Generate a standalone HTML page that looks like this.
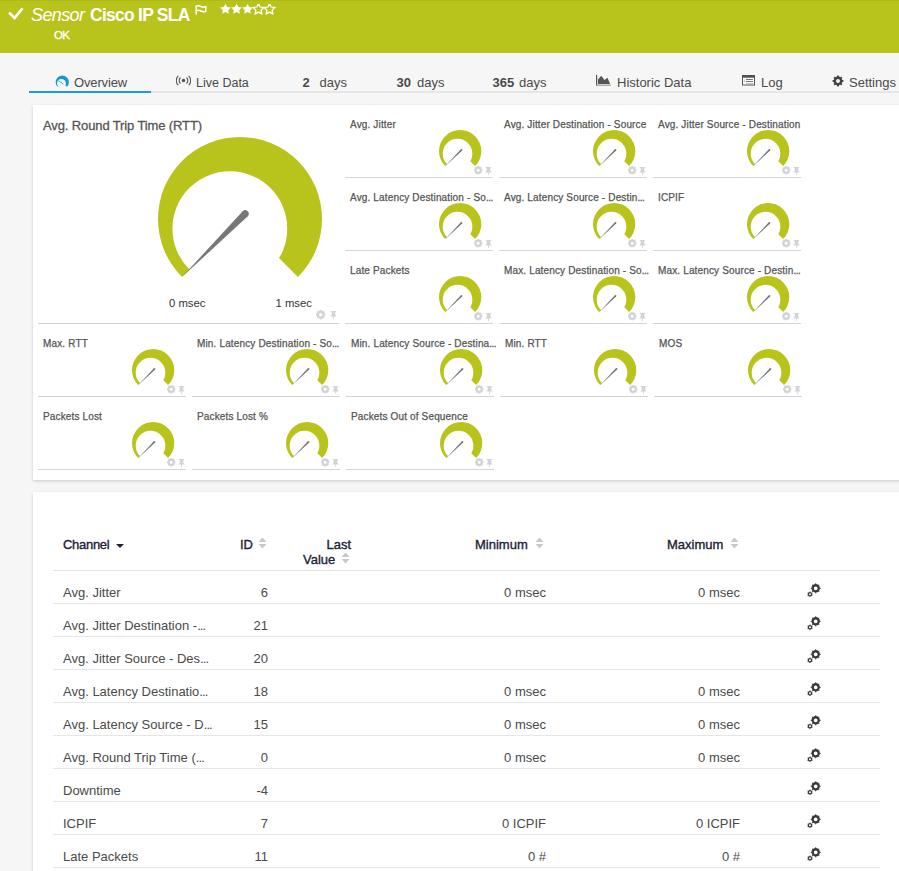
<!DOCTYPE html>
<html><head><meta charset="utf-8"><style>
html,body{margin:0;padding:0;width:899px;height:871px;overflow:hidden;background:#f6f6f6;font-family:"Liberation Sans",sans-serif;}
.t{position:absolute;white-space:nowrap;line-height:1.15;}
.panel{position:absolute;background:#fff;box-shadow:0 1px 3px rgba(0,0,0,0.18);}
.tt{font-size:10px;letter-spacing:0.15px;-webkit-text-stroke:0.25px #555;color:#555;}
.el2{font-style:normal;letter-spacing:-0.5px;}
.th{font-size:13px;-webkit-text-stroke:0.35px #1c2233;color:#1c2233;}
.td{font-size:13px;color:#4a4a4a;}
.el{font-style:normal;letter-spacing:-0.9px;}
</style></head><body>
<div style='position:absolute;left:0;top:0;width:899px;height:53px;background:#b8c41c'></div><div style='position:absolute;left:0;top:0;width:899px;height:1.3px;background:#afbb19'></div><svg style='position:absolute;left:7px;top:6px' width='18' height='16'><path d='M2,6.5 L7.6,12 L15.5,2.2' stroke='#fff' stroke-width='2.6' fill='none'/></svg><div class='t' style='left:31px;top:4.5px;font-size:18px;letter-spacing:-0.63px;font-style:italic;color:#fff'>Sensor</div><div class='t' style='left:90px;top:5px;font-size:17.5px;letter-spacing:-0.75px;font-weight:bold;color:#fff'>Cisco IP SLA</div><svg style='position:absolute;left:195px;top:5px' width='13' height='10'><path d='M1.2,0.5 V9.8 M1.2,1.3 Q3.5,0.2 6,1.5 Q8.5,2.6 10.8,1.6 V6.2 Q8.5,7.2 6,6 Q3.5,4.8 1.2,5.8' stroke='#fff' stroke-width='1.5' fill='none'/></svg><svg style='position:absolute;left:220px;top:4px' width='58' height='12'><polygon points='5.50,-0.30 7.15,3.03 10.83,3.57 8.16,6.17 8.79,9.83 5.50,8.10 2.21,9.83 2.84,6.17 0.17,3.57 3.85,3.03' fill='#fff'/><polygon points='16.50,-0.30 18.15,3.03 21.83,3.57 19.16,6.17 19.79,9.83 16.50,8.10 13.21,9.83 13.84,6.17 11.17,3.57 14.85,3.03' fill='#fff'/><polygon points='27.50,-0.30 29.15,3.03 32.83,3.57 30.16,6.17 30.79,9.83 27.50,8.10 24.21,9.83 24.84,6.17 22.17,3.57 25.85,3.03' fill='#fff'/><polygon points='38.50,-0.30 40.15,3.03 43.83,3.57 41.16,6.17 41.79,9.83 38.50,8.10 35.21,9.83 35.84,6.17 33.17,3.57 36.85,3.03' fill='none' stroke='#fff' stroke-width='1.3'/><polygon points='49.50,-0.30 51.15,3.03 54.83,3.57 52.16,6.17 52.79,9.83 49.50,8.10 46.21,9.83 46.84,6.17 44.17,3.57 47.85,3.03' fill='none' stroke='#fff' stroke-width='1.3'/></svg><div class='t' style='left:54px;top:29px;font-size:11.5px;letter-spacing:-0.8px;-webkit-text-stroke:0.3px #fff;color:#fff'>OK</div><div style='position:absolute;left:30px;top:91px;width:869px;height:2px;background:#e6e6e6'></div><div style='position:absolute;left:29px;top:91px;width:122px;height:2px;background:#1a9bd7'></div><svg style='position:absolute;left:50px;top:73.3px' width='24' height='18'><path d='M12.3,9.2 L7.63,13.87 A6.6,6.6 0 1 1 16.97,13.87 Z' fill='#139ad6'/><circle cx='11.4' cy='10.3' r='4.4' fill='#f6f6f6'/><path d='M8.3,7.6 L13.3,11' stroke='#139ad6' stroke-width='0.9'/></svg><div class='t' style='left:74px;top:76px;font-size:13px;letter-spacing:-0.15px;color:#4a4a4a'>Overview</div><svg style='position:absolute;left:176px;top:75px' width='15' height='11'><circle cx='7.5' cy='5.5' r='1.8' fill='#555'/><path d='M4.5,2.5 A4,4 0 0 0 4.5,8.5 M10.5,2.5 A4,4 0 0 1 10.5,8.5 M2.3,0.8 A6.5,6.5 0 0 0 2.3,10.2 M12.7,0.8 A6.5,6.5 0 0 1 12.7,10.2' stroke='#555' stroke-width='1.1' fill='none'/></svg><div class='t' style='left:196px;top:76px;font-size:12.5px;color:#4a4a4a'>Live Data</div><div class='t' style='left:302.5px;top:76px;font-size:13px;font-weight:bold;color:#4a4a4a'>2</div><div class='t' style='left:319.5px;top:76px;font-size:13px;color:#4a4a4a'>days</div><div class='t' style='left:396.5px;top:76px;font-size:13px;font-weight:bold;color:#4a4a4a'>30</div><div class='t' style='left:417px;top:76px;font-size:13px;color:#4a4a4a'>days</div><div class='t' style='left:492.5px;top:76px;font-size:13px;font-weight:bold;color:#4a4a4a'>365</div><div class='t' style='left:519px;top:76px;font-size:13px;color:#4a4a4a'>days</div><svg style='position:absolute;left:590px;top:70px' width='24' height='20'><rect x='6' y='5' width='1.2' height='11' fill='#555'/><rect x='6' y='14.6' width='15' height='1.2' fill='#999'/><path d='M8,14 L8,9.5 L11.2,5.8 L14.5,10 L17.5,7.8 L20,13.8 V14 Z' fill='#555'/></svg><div class='t' style='left:617px;top:76px;font-size:13px;color:#4a4a4a'>Historic Data</div><svg style='position:absolute;left:736px;top:70px' width='24' height='20'><rect x='6.5' y='5.5' width='12' height='9.5' fill='#fff' stroke='#555' stroke-width='1'/><rect x='6' y='5' width='13' height='2.7' fill='#505050'/><path d='M10,9.5 H17 M10,11.5 H17' stroke='#666' stroke-width='0.9'/><path d='M10,13.5 H17' stroke='#bbb' stroke-width='0.9'/><path d='M8.3,9.5 V12' stroke='#aaa' stroke-width='0.7'/></svg><div class='t' style='left:761px;top:76px;font-size:13px;color:#4a4a4a'>Log</div><svg style='position:absolute;left:832px;top:74.5px' width='12' height='12'><circle cx='6' cy='6' r='3.2' fill='none' stroke='#444' stroke-width='2.4'/><rect x='5' y='0.6' width='2' height='2' fill='#444' transform='rotate(0 6 6)'/><rect x='5' y='0.6' width='2' height='2' fill='#444' transform='rotate(45 6 6)'/><rect x='5' y='0.6' width='2' height='2' fill='#444' transform='rotate(90 6 6)'/><rect x='5' y='0.6' width='2' height='2' fill='#444' transform='rotate(135 6 6)'/><rect x='5' y='0.6' width='2' height='2' fill='#444' transform='rotate(180 6 6)'/><rect x='5' y='0.6' width='2' height='2' fill='#444' transform='rotate(225 6 6)'/><rect x='5' y='0.6' width='2' height='2' fill='#444' transform='rotate(270 6 6)'/><rect x='5' y='0.6' width='2' height='2' fill='#444' transform='rotate(315 6 6)'/></svg><div class='t' style='left:849px;top:76px;font-size:13px;color:#4a4a4a'>Settings</div><div class='panel' style='left:33px;top:105px;width:900px;height:375px'></div><div class='t' style='left:43px;top:119px;font-size:13px;letter-spacing:-0.12px;-webkit-text-stroke:0.3px #555;color:#555'>Avg. Round Trip Time (RTT)</div><svg style='position:absolute;left:153.90px;top:132.50px' width='172.00' height='172.00'><path d='M86.00,86.00 L28.02,143.98 A82.00,82.00 0 1 1 143.98,143.98 Z' fill='#b8c41c'/><circle cx='75.83' cy='95.68' r='57.40' fill='#fff'/><path d='M27.72,144.28 L93.77,83.33 A3.61,3.61 0 0 0 88.67,78.23 Z' fill='#777'/></svg><div class='t' style='left:169px;top:297px;font-size:11.3px;color:#333'>0 msec</div><div class='t' style='left:275.5px;top:297px;font-size:11.3px;color:#333'>1 msec</div><svg style='position:absolute;left:314.80px;top:309.30px' width='11.40' height='11.40'><circle cx='5.70' cy='5.70' r='2.91' fill='none' stroke='#d2d4d6' stroke-width='2.44'/><rect x='4.71' y='1.00' width='1.97' height='1.88' fill='#d2d4d6' transform='rotate(0 5.70 5.70)'/><rect x='4.71' y='1.00' width='1.97' height='1.88' fill='#d2d4d6' transform='rotate(45 5.70 5.70)'/><rect x='4.71' y='1.00' width='1.97' height='1.88' fill='#d2d4d6' transform='rotate(90 5.70 5.70)'/><rect x='4.71' y='1.00' width='1.97' height='1.88' fill='#d2d4d6' transform='rotate(135 5.70 5.70)'/><rect x='4.71' y='1.00' width='1.97' height='1.88' fill='#d2d4d6' transform='rotate(180 5.70 5.70)'/><rect x='4.71' y='1.00' width='1.97' height='1.88' fill='#d2d4d6' transform='rotate(225 5.70 5.70)'/><rect x='4.71' y='1.00' width='1.97' height='1.88' fill='#d2d4d6' transform='rotate(270 5.70 5.70)'/><rect x='4.71' y='1.00' width='1.97' height='1.88' fill='#d2d4d6' transform='rotate(315 5.70 5.70)'/></svg><svg style='position:absolute;left:329.5px;top:310.5px' width='7' height='8'><path d='M0.8,0 H6.2 V1 H5.3 V3.6 L6.6,5.6 H3.9 V8 H3.1 V5.6 H0.4 L1.7,3.6 V1 H0.8 Z' fill='#d2d4d6'/></svg><div style='position:absolute;left:38px;top:323px;width:301px;height:1px;background:#d5d5d5'></div><div class='t tt' style='left:350px;top:119px'>Avg. Jitter</div><svg style='position:absolute;left:434.85px;top:125.85px' width='50.30' height='50.30'><path d='M25.15,25.15 L10.19,40.11 A21.15,21.15 0 1 1 40.11,40.11 Z' fill='#b8c41c'/><circle cx='22.53' cy='27.65' r='14.80' fill='#fff'/><path d='M9.89,40.41 L27.15,24.46 A0.93,0.93 0 0 0 25.84,23.15 Z' fill='#777'/></svg><svg style='position:absolute;left:472.60px;top:165.30px' width='10.40' height='10.40'><circle cx='5.20' cy='5.20' r='2.60' fill='none' stroke='#d2d4d6' stroke-width='2.18'/><rect x='4.32' y='1.00' width='1.76' height='1.68' fill='#d2d4d6' transform='rotate(0 5.20 5.20)'/><rect x='4.32' y='1.00' width='1.76' height='1.68' fill='#d2d4d6' transform='rotate(45 5.20 5.20)'/><rect x='4.32' y='1.00' width='1.76' height='1.68' fill='#d2d4d6' transform='rotate(90 5.20 5.20)'/><rect x='4.32' y='1.00' width='1.76' height='1.68' fill='#d2d4d6' transform='rotate(135 5.20 5.20)'/><rect x='4.32' y='1.00' width='1.76' height='1.68' fill='#d2d4d6' transform='rotate(180 5.20 5.20)'/><rect x='4.32' y='1.00' width='1.76' height='1.68' fill='#d2d4d6' transform='rotate(225 5.20 5.20)'/><rect x='4.32' y='1.00' width='1.76' height='1.68' fill='#d2d4d6' transform='rotate(270 5.20 5.20)'/><rect x='4.32' y='1.00' width='1.76' height='1.68' fill='#d2d4d6' transform='rotate(315 5.20 5.20)'/></svg><svg style='position:absolute;left:485.3px;top:167px' width='7' height='8'><path d='M0.8,0 H6.2 V1 H5.3 V3.6 L6.6,5.6 H3.9 V8 H3.1 V5.6 H0.4 L1.7,3.6 V1 H0.8 Z' fill='#d2d4d6'/></svg><div style='position:absolute;left:345px;top:177px;width:148px;height:1px;background:#d5d5d5'></div><div class='t tt' style='left:504px;top:119px'>Avg. Jitter Destination - Source</div><svg style='position:absolute;left:588.85px;top:125.85px' width='50.30' height='50.30'><path d='M25.15,25.15 L10.19,40.11 A21.15,21.15 0 1 1 40.11,40.11 Z' fill='#b8c41c'/><circle cx='22.53' cy='27.65' r='14.80' fill='#fff'/><path d='M9.89,40.41 L27.15,24.46 A0.93,0.93 0 0 0 25.84,23.15 Z' fill='#777'/></svg><svg style='position:absolute;left:626.60px;top:165.30px' width='10.40' height='10.40'><circle cx='5.20' cy='5.20' r='2.60' fill='none' stroke='#d2d4d6' stroke-width='2.18'/><rect x='4.32' y='1.00' width='1.76' height='1.68' fill='#d2d4d6' transform='rotate(0 5.20 5.20)'/><rect x='4.32' y='1.00' width='1.76' height='1.68' fill='#d2d4d6' transform='rotate(45 5.20 5.20)'/><rect x='4.32' y='1.00' width='1.76' height='1.68' fill='#d2d4d6' transform='rotate(90 5.20 5.20)'/><rect x='4.32' y='1.00' width='1.76' height='1.68' fill='#d2d4d6' transform='rotate(135 5.20 5.20)'/><rect x='4.32' y='1.00' width='1.76' height='1.68' fill='#d2d4d6' transform='rotate(180 5.20 5.20)'/><rect x='4.32' y='1.00' width='1.76' height='1.68' fill='#d2d4d6' transform='rotate(225 5.20 5.20)'/><rect x='4.32' y='1.00' width='1.76' height='1.68' fill='#d2d4d6' transform='rotate(270 5.20 5.20)'/><rect x='4.32' y='1.00' width='1.76' height='1.68' fill='#d2d4d6' transform='rotate(315 5.20 5.20)'/></svg><svg style='position:absolute;left:639.3px;top:167px' width='7' height='8'><path d='M0.8,0 H6.2 V1 H5.3 V3.6 L6.6,5.6 H3.9 V8 H3.1 V5.6 H0.4 L1.7,3.6 V1 H0.8 Z' fill='#d2d4d6'/></svg><div style='position:absolute;left:499px;top:177px;width:148px;height:1px;background:#d5d5d5'></div><div class='t tt' style='left:658px;top:119px'>Avg. Jitter Source - Destination</div><svg style='position:absolute;left:742.85px;top:125.85px' width='50.30' height='50.30'><path d='M25.15,25.15 L10.19,40.11 A21.15,21.15 0 1 1 40.11,40.11 Z' fill='#b8c41c'/><circle cx='22.53' cy='27.65' r='14.80' fill='#fff'/><path d='M9.89,40.41 L27.15,24.46 A0.93,0.93 0 0 0 25.84,23.15 Z' fill='#777'/></svg><svg style='position:absolute;left:780.60px;top:165.30px' width='10.40' height='10.40'><circle cx='5.20' cy='5.20' r='2.60' fill='none' stroke='#d2d4d6' stroke-width='2.18'/><rect x='4.32' y='1.00' width='1.76' height='1.68' fill='#d2d4d6' transform='rotate(0 5.20 5.20)'/><rect x='4.32' y='1.00' width='1.76' height='1.68' fill='#d2d4d6' transform='rotate(45 5.20 5.20)'/><rect x='4.32' y='1.00' width='1.76' height='1.68' fill='#d2d4d6' transform='rotate(90 5.20 5.20)'/><rect x='4.32' y='1.00' width='1.76' height='1.68' fill='#d2d4d6' transform='rotate(135 5.20 5.20)'/><rect x='4.32' y='1.00' width='1.76' height='1.68' fill='#d2d4d6' transform='rotate(180 5.20 5.20)'/><rect x='4.32' y='1.00' width='1.76' height='1.68' fill='#d2d4d6' transform='rotate(225 5.20 5.20)'/><rect x='4.32' y='1.00' width='1.76' height='1.68' fill='#d2d4d6' transform='rotate(270 5.20 5.20)'/><rect x='4.32' y='1.00' width='1.76' height='1.68' fill='#d2d4d6' transform='rotate(315 5.20 5.20)'/></svg><svg style='position:absolute;left:793.3px;top:167px' width='7' height='8'><path d='M0.8,0 H6.2 V1 H5.3 V3.6 L6.6,5.6 H3.9 V8 H3.1 V5.6 H0.4 L1.7,3.6 V1 H0.8 Z' fill='#d2d4d6'/></svg><div style='position:absolute;left:653px;top:177px;width:148px;height:1px;background:#d5d5d5'></div><div class='t tt' style='left:350px;top:192px'>Avg. Latency Destination - So<i class=el2>...</i></div><svg style='position:absolute;left:434.85px;top:198.85px' width='50.30' height='50.30'><path d='M25.15,25.15 L10.19,40.11 A21.15,21.15 0 1 1 40.11,40.11 Z' fill='#b8c41c'/><circle cx='22.53' cy='27.65' r='14.80' fill='#fff'/><path d='M9.89,40.41 L27.15,24.46 A0.93,0.93 0 0 0 25.84,23.15 Z' fill='#777'/></svg><svg style='position:absolute;left:472.60px;top:238.30px' width='10.40' height='10.40'><circle cx='5.20' cy='5.20' r='2.60' fill='none' stroke='#d2d4d6' stroke-width='2.18'/><rect x='4.32' y='1.00' width='1.76' height='1.68' fill='#d2d4d6' transform='rotate(0 5.20 5.20)'/><rect x='4.32' y='1.00' width='1.76' height='1.68' fill='#d2d4d6' transform='rotate(45 5.20 5.20)'/><rect x='4.32' y='1.00' width='1.76' height='1.68' fill='#d2d4d6' transform='rotate(90 5.20 5.20)'/><rect x='4.32' y='1.00' width='1.76' height='1.68' fill='#d2d4d6' transform='rotate(135 5.20 5.20)'/><rect x='4.32' y='1.00' width='1.76' height='1.68' fill='#d2d4d6' transform='rotate(180 5.20 5.20)'/><rect x='4.32' y='1.00' width='1.76' height='1.68' fill='#d2d4d6' transform='rotate(225 5.20 5.20)'/><rect x='4.32' y='1.00' width='1.76' height='1.68' fill='#d2d4d6' transform='rotate(270 5.20 5.20)'/><rect x='4.32' y='1.00' width='1.76' height='1.68' fill='#d2d4d6' transform='rotate(315 5.20 5.20)'/></svg><svg style='position:absolute;left:485.3px;top:240px' width='7' height='8'><path d='M0.8,0 H6.2 V1 H5.3 V3.6 L6.6,5.6 H3.9 V8 H3.1 V5.6 H0.4 L1.7,3.6 V1 H0.8 Z' fill='#d2d4d6'/></svg><div style='position:absolute;left:345px;top:250px;width:148px;height:1px;background:#d5d5d5'></div><div class='t tt' style='left:504px;top:192px'>Avg. Latency Source - Destin<i class=el2>...</i></div><svg style='position:absolute;left:588.85px;top:198.85px' width='50.30' height='50.30'><path d='M25.15,25.15 L10.19,40.11 A21.15,21.15 0 1 1 40.11,40.11 Z' fill='#b8c41c'/><circle cx='22.53' cy='27.65' r='14.80' fill='#fff'/><path d='M9.89,40.41 L27.15,24.46 A0.93,0.93 0 0 0 25.84,23.15 Z' fill='#777'/></svg><svg style='position:absolute;left:626.60px;top:238.30px' width='10.40' height='10.40'><circle cx='5.20' cy='5.20' r='2.60' fill='none' stroke='#d2d4d6' stroke-width='2.18'/><rect x='4.32' y='1.00' width='1.76' height='1.68' fill='#d2d4d6' transform='rotate(0 5.20 5.20)'/><rect x='4.32' y='1.00' width='1.76' height='1.68' fill='#d2d4d6' transform='rotate(45 5.20 5.20)'/><rect x='4.32' y='1.00' width='1.76' height='1.68' fill='#d2d4d6' transform='rotate(90 5.20 5.20)'/><rect x='4.32' y='1.00' width='1.76' height='1.68' fill='#d2d4d6' transform='rotate(135 5.20 5.20)'/><rect x='4.32' y='1.00' width='1.76' height='1.68' fill='#d2d4d6' transform='rotate(180 5.20 5.20)'/><rect x='4.32' y='1.00' width='1.76' height='1.68' fill='#d2d4d6' transform='rotate(225 5.20 5.20)'/><rect x='4.32' y='1.00' width='1.76' height='1.68' fill='#d2d4d6' transform='rotate(270 5.20 5.20)'/><rect x='4.32' y='1.00' width='1.76' height='1.68' fill='#d2d4d6' transform='rotate(315 5.20 5.20)'/></svg><svg style='position:absolute;left:639.3px;top:240px' width='7' height='8'><path d='M0.8,0 H6.2 V1 H5.3 V3.6 L6.6,5.6 H3.9 V8 H3.1 V5.6 H0.4 L1.7,3.6 V1 H0.8 Z' fill='#d2d4d6'/></svg><div style='position:absolute;left:499px;top:250px;width:148px;height:1px;background:#d5d5d5'></div><div class='t tt' style='left:658px;top:192px'>ICPIF</div><svg style='position:absolute;left:742.85px;top:198.85px' width='50.30' height='50.30'><path d='M25.15,25.15 L10.19,40.11 A21.15,21.15 0 1 1 40.11,40.11 Z' fill='#b8c41c'/><circle cx='22.53' cy='27.65' r='14.80' fill='#fff'/><path d='M9.89,40.41 L27.15,24.46 A0.93,0.93 0 0 0 25.84,23.15 Z' fill='#777'/></svg><svg style='position:absolute;left:780.60px;top:238.30px' width='10.40' height='10.40'><circle cx='5.20' cy='5.20' r='2.60' fill='none' stroke='#d2d4d6' stroke-width='2.18'/><rect x='4.32' y='1.00' width='1.76' height='1.68' fill='#d2d4d6' transform='rotate(0 5.20 5.20)'/><rect x='4.32' y='1.00' width='1.76' height='1.68' fill='#d2d4d6' transform='rotate(45 5.20 5.20)'/><rect x='4.32' y='1.00' width='1.76' height='1.68' fill='#d2d4d6' transform='rotate(90 5.20 5.20)'/><rect x='4.32' y='1.00' width='1.76' height='1.68' fill='#d2d4d6' transform='rotate(135 5.20 5.20)'/><rect x='4.32' y='1.00' width='1.76' height='1.68' fill='#d2d4d6' transform='rotate(180 5.20 5.20)'/><rect x='4.32' y='1.00' width='1.76' height='1.68' fill='#d2d4d6' transform='rotate(225 5.20 5.20)'/><rect x='4.32' y='1.00' width='1.76' height='1.68' fill='#d2d4d6' transform='rotate(270 5.20 5.20)'/><rect x='4.32' y='1.00' width='1.76' height='1.68' fill='#d2d4d6' transform='rotate(315 5.20 5.20)'/></svg><svg style='position:absolute;left:793.3px;top:240px' width='7' height='8'><path d='M0.8,0 H6.2 V1 H5.3 V3.6 L6.6,5.6 H3.9 V8 H3.1 V5.6 H0.4 L1.7,3.6 V1 H0.8 Z' fill='#d2d4d6'/></svg><div style='position:absolute;left:653px;top:250px;width:148px;height:1px;background:#d5d5d5'></div><div class='t tt' style='left:350px;top:265px'>Late Packets</div><svg style='position:absolute;left:434.85px;top:271.85px' width='50.30' height='50.30'><path d='M25.15,25.15 L10.19,40.11 A21.15,21.15 0 1 1 40.11,40.11 Z' fill='#b8c41c'/><circle cx='22.53' cy='27.65' r='14.80' fill='#fff'/><path d='M9.89,40.41 L27.15,24.46 A0.93,0.93 0 0 0 25.84,23.15 Z' fill='#777'/></svg><svg style='position:absolute;left:472.60px;top:311.30px' width='10.40' height='10.40'><circle cx='5.20' cy='5.20' r='2.60' fill='none' stroke='#d2d4d6' stroke-width='2.18'/><rect x='4.32' y='1.00' width='1.76' height='1.68' fill='#d2d4d6' transform='rotate(0 5.20 5.20)'/><rect x='4.32' y='1.00' width='1.76' height='1.68' fill='#d2d4d6' transform='rotate(45 5.20 5.20)'/><rect x='4.32' y='1.00' width='1.76' height='1.68' fill='#d2d4d6' transform='rotate(90 5.20 5.20)'/><rect x='4.32' y='1.00' width='1.76' height='1.68' fill='#d2d4d6' transform='rotate(135 5.20 5.20)'/><rect x='4.32' y='1.00' width='1.76' height='1.68' fill='#d2d4d6' transform='rotate(180 5.20 5.20)'/><rect x='4.32' y='1.00' width='1.76' height='1.68' fill='#d2d4d6' transform='rotate(225 5.20 5.20)'/><rect x='4.32' y='1.00' width='1.76' height='1.68' fill='#d2d4d6' transform='rotate(270 5.20 5.20)'/><rect x='4.32' y='1.00' width='1.76' height='1.68' fill='#d2d4d6' transform='rotate(315 5.20 5.20)'/></svg><svg style='position:absolute;left:485.3px;top:313px' width='7' height='8'><path d='M0.8,0 H6.2 V1 H5.3 V3.6 L6.6,5.6 H3.9 V8 H3.1 V5.6 H0.4 L1.7,3.6 V1 H0.8 Z' fill='#d2d4d6'/></svg><div style='position:absolute;left:345px;top:323px;width:148px;height:1px;background:#d5d5d5'></div><div class='t tt' style='left:504px;top:265px'>Max. Latency Destination - So<i class=el2>...</i></div><svg style='position:absolute;left:588.85px;top:271.85px' width='50.30' height='50.30'><path d='M25.15,25.15 L10.19,40.11 A21.15,21.15 0 1 1 40.11,40.11 Z' fill='#b8c41c'/><circle cx='22.53' cy='27.65' r='14.80' fill='#fff'/><path d='M9.89,40.41 L27.15,24.46 A0.93,0.93 0 0 0 25.84,23.15 Z' fill='#777'/></svg><svg style='position:absolute;left:626.60px;top:311.30px' width='10.40' height='10.40'><circle cx='5.20' cy='5.20' r='2.60' fill='none' stroke='#d2d4d6' stroke-width='2.18'/><rect x='4.32' y='1.00' width='1.76' height='1.68' fill='#d2d4d6' transform='rotate(0 5.20 5.20)'/><rect x='4.32' y='1.00' width='1.76' height='1.68' fill='#d2d4d6' transform='rotate(45 5.20 5.20)'/><rect x='4.32' y='1.00' width='1.76' height='1.68' fill='#d2d4d6' transform='rotate(90 5.20 5.20)'/><rect x='4.32' y='1.00' width='1.76' height='1.68' fill='#d2d4d6' transform='rotate(135 5.20 5.20)'/><rect x='4.32' y='1.00' width='1.76' height='1.68' fill='#d2d4d6' transform='rotate(180 5.20 5.20)'/><rect x='4.32' y='1.00' width='1.76' height='1.68' fill='#d2d4d6' transform='rotate(225 5.20 5.20)'/><rect x='4.32' y='1.00' width='1.76' height='1.68' fill='#d2d4d6' transform='rotate(270 5.20 5.20)'/><rect x='4.32' y='1.00' width='1.76' height='1.68' fill='#d2d4d6' transform='rotate(315 5.20 5.20)'/></svg><svg style='position:absolute;left:639.3px;top:313px' width='7' height='8'><path d='M0.8,0 H6.2 V1 H5.3 V3.6 L6.6,5.6 H3.9 V8 H3.1 V5.6 H0.4 L1.7,3.6 V1 H0.8 Z' fill='#d2d4d6'/></svg><div style='position:absolute;left:499px;top:323px;width:148px;height:1px;background:#d5d5d5'></div><div class='t tt' style='left:658px;top:265px'>Max. Latency Source - Destin<i class=el2>...</i></div><svg style='position:absolute;left:742.85px;top:271.85px' width='50.30' height='50.30'><path d='M25.15,25.15 L10.19,40.11 A21.15,21.15 0 1 1 40.11,40.11 Z' fill='#b8c41c'/><circle cx='22.53' cy='27.65' r='14.80' fill='#fff'/><path d='M9.89,40.41 L27.15,24.46 A0.93,0.93 0 0 0 25.84,23.15 Z' fill='#777'/></svg><svg style='position:absolute;left:780.60px;top:311.30px' width='10.40' height='10.40'><circle cx='5.20' cy='5.20' r='2.60' fill='none' stroke='#d2d4d6' stroke-width='2.18'/><rect x='4.32' y='1.00' width='1.76' height='1.68' fill='#d2d4d6' transform='rotate(0 5.20 5.20)'/><rect x='4.32' y='1.00' width='1.76' height='1.68' fill='#d2d4d6' transform='rotate(45 5.20 5.20)'/><rect x='4.32' y='1.00' width='1.76' height='1.68' fill='#d2d4d6' transform='rotate(90 5.20 5.20)'/><rect x='4.32' y='1.00' width='1.76' height='1.68' fill='#d2d4d6' transform='rotate(135 5.20 5.20)'/><rect x='4.32' y='1.00' width='1.76' height='1.68' fill='#d2d4d6' transform='rotate(180 5.20 5.20)'/><rect x='4.32' y='1.00' width='1.76' height='1.68' fill='#d2d4d6' transform='rotate(225 5.20 5.20)'/><rect x='4.32' y='1.00' width='1.76' height='1.68' fill='#d2d4d6' transform='rotate(270 5.20 5.20)'/><rect x='4.32' y='1.00' width='1.76' height='1.68' fill='#d2d4d6' transform='rotate(315 5.20 5.20)'/></svg><svg style='position:absolute;left:793.3px;top:313px' width='7' height='8'><path d='M0.8,0 H6.2 V1 H5.3 V3.6 L6.6,5.6 H3.9 V8 H3.1 V5.6 H0.4 L1.7,3.6 V1 H0.8 Z' fill='#d2d4d6'/></svg><div style='position:absolute;left:653px;top:323px;width:148px;height:1px;background:#d5d5d5'></div><div class='t tt' style='left:43px;top:338px'>Max. RTT</div><svg style='position:absolute;left:127.85px;top:344.85px' width='50.30' height='50.30'><path d='M25.15,25.15 L10.19,40.11 A21.15,21.15 0 1 1 40.11,40.11 Z' fill='#b8c41c'/><circle cx='22.53' cy='27.65' r='14.80' fill='#fff'/><path d='M9.89,40.41 L27.15,24.46 A0.93,0.93 0 0 0 25.84,23.15 Z' fill='#777'/></svg><svg style='position:absolute;left:165.60px;top:384.30px' width='10.40' height='10.40'><circle cx='5.20' cy='5.20' r='2.60' fill='none' stroke='#d2d4d6' stroke-width='2.18'/><rect x='4.32' y='1.00' width='1.76' height='1.68' fill='#d2d4d6' transform='rotate(0 5.20 5.20)'/><rect x='4.32' y='1.00' width='1.76' height='1.68' fill='#d2d4d6' transform='rotate(45 5.20 5.20)'/><rect x='4.32' y='1.00' width='1.76' height='1.68' fill='#d2d4d6' transform='rotate(90 5.20 5.20)'/><rect x='4.32' y='1.00' width='1.76' height='1.68' fill='#d2d4d6' transform='rotate(135 5.20 5.20)'/><rect x='4.32' y='1.00' width='1.76' height='1.68' fill='#d2d4d6' transform='rotate(180 5.20 5.20)'/><rect x='4.32' y='1.00' width='1.76' height='1.68' fill='#d2d4d6' transform='rotate(225 5.20 5.20)'/><rect x='4.32' y='1.00' width='1.76' height='1.68' fill='#d2d4d6' transform='rotate(270 5.20 5.20)'/><rect x='4.32' y='1.00' width='1.76' height='1.68' fill='#d2d4d6' transform='rotate(315 5.20 5.20)'/></svg><svg style='position:absolute;left:178.3px;top:386px' width='7' height='8'><path d='M0.8,0 H6.2 V1 H5.3 V3.6 L6.6,5.6 H3.9 V8 H3.1 V5.6 H0.4 L1.7,3.6 V1 H0.8 Z' fill='#d2d4d6'/></svg><div style='position:absolute;left:38px;top:396px;width:148px;height:1px;background:#d5d5d5'></div><div class='t tt' style='left:197px;top:338px'>Min. Latency Destination - So<i class=el2>...</i></div><svg style='position:absolute;left:281.85px;top:344.85px' width='50.30' height='50.30'><path d='M25.15,25.15 L10.19,40.11 A21.15,21.15 0 1 1 40.11,40.11 Z' fill='#b8c41c'/><circle cx='22.53' cy='27.65' r='14.80' fill='#fff'/><path d='M9.89,40.41 L27.15,24.46 A0.93,0.93 0 0 0 25.84,23.15 Z' fill='#777'/></svg><svg style='position:absolute;left:319.60px;top:384.30px' width='10.40' height='10.40'><circle cx='5.20' cy='5.20' r='2.60' fill='none' stroke='#d2d4d6' stroke-width='2.18'/><rect x='4.32' y='1.00' width='1.76' height='1.68' fill='#d2d4d6' transform='rotate(0 5.20 5.20)'/><rect x='4.32' y='1.00' width='1.76' height='1.68' fill='#d2d4d6' transform='rotate(45 5.20 5.20)'/><rect x='4.32' y='1.00' width='1.76' height='1.68' fill='#d2d4d6' transform='rotate(90 5.20 5.20)'/><rect x='4.32' y='1.00' width='1.76' height='1.68' fill='#d2d4d6' transform='rotate(135 5.20 5.20)'/><rect x='4.32' y='1.00' width='1.76' height='1.68' fill='#d2d4d6' transform='rotate(180 5.20 5.20)'/><rect x='4.32' y='1.00' width='1.76' height='1.68' fill='#d2d4d6' transform='rotate(225 5.20 5.20)'/><rect x='4.32' y='1.00' width='1.76' height='1.68' fill='#d2d4d6' transform='rotate(270 5.20 5.20)'/><rect x='4.32' y='1.00' width='1.76' height='1.68' fill='#d2d4d6' transform='rotate(315 5.20 5.20)'/></svg><svg style='position:absolute;left:332.3px;top:386px' width='7' height='8'><path d='M0.8,0 H6.2 V1 H5.3 V3.6 L6.6,5.6 H3.9 V8 H3.1 V5.6 H0.4 L1.7,3.6 V1 H0.8 Z' fill='#d2d4d6'/></svg><div style='position:absolute;left:192px;top:396px;width:148px;height:1px;background:#d5d5d5'></div><div class='t tt' style='left:351px;top:338px'>Min. Latency Source - Destina<i class=el2>...</i></div><svg style='position:absolute;left:435.85px;top:344.85px' width='50.30' height='50.30'><path d='M25.15,25.15 L10.19,40.11 A21.15,21.15 0 1 1 40.11,40.11 Z' fill='#b8c41c'/><circle cx='22.53' cy='27.65' r='14.80' fill='#fff'/><path d='M9.89,40.41 L27.15,24.46 A0.93,0.93 0 0 0 25.84,23.15 Z' fill='#777'/></svg><svg style='position:absolute;left:473.60px;top:384.30px' width='10.40' height='10.40'><circle cx='5.20' cy='5.20' r='2.60' fill='none' stroke='#d2d4d6' stroke-width='2.18'/><rect x='4.32' y='1.00' width='1.76' height='1.68' fill='#d2d4d6' transform='rotate(0 5.20 5.20)'/><rect x='4.32' y='1.00' width='1.76' height='1.68' fill='#d2d4d6' transform='rotate(45 5.20 5.20)'/><rect x='4.32' y='1.00' width='1.76' height='1.68' fill='#d2d4d6' transform='rotate(90 5.20 5.20)'/><rect x='4.32' y='1.00' width='1.76' height='1.68' fill='#d2d4d6' transform='rotate(135 5.20 5.20)'/><rect x='4.32' y='1.00' width='1.76' height='1.68' fill='#d2d4d6' transform='rotate(180 5.20 5.20)'/><rect x='4.32' y='1.00' width='1.76' height='1.68' fill='#d2d4d6' transform='rotate(225 5.20 5.20)'/><rect x='4.32' y='1.00' width='1.76' height='1.68' fill='#d2d4d6' transform='rotate(270 5.20 5.20)'/><rect x='4.32' y='1.00' width='1.76' height='1.68' fill='#d2d4d6' transform='rotate(315 5.20 5.20)'/></svg><svg style='position:absolute;left:486.3px;top:386px' width='7' height='8'><path d='M0.8,0 H6.2 V1 H5.3 V3.6 L6.6,5.6 H3.9 V8 H3.1 V5.6 H0.4 L1.7,3.6 V1 H0.8 Z' fill='#d2d4d6'/></svg><div style='position:absolute;left:346px;top:396px;width:148px;height:1px;background:#d5d5d5'></div><div class='t tt' style='left:505px;top:338px'>Min. RTT</div><svg style='position:absolute;left:589.85px;top:344.85px' width='50.30' height='50.30'><path d='M25.15,25.15 L10.19,40.11 A21.15,21.15 0 1 1 40.11,40.11 Z' fill='#b8c41c'/><circle cx='22.53' cy='27.65' r='14.80' fill='#fff'/><path d='M9.89,40.41 L27.15,24.46 A0.93,0.93 0 0 0 25.84,23.15 Z' fill='#777'/></svg><svg style='position:absolute;left:627.60px;top:384.30px' width='10.40' height='10.40'><circle cx='5.20' cy='5.20' r='2.60' fill='none' stroke='#d2d4d6' stroke-width='2.18'/><rect x='4.32' y='1.00' width='1.76' height='1.68' fill='#d2d4d6' transform='rotate(0 5.20 5.20)'/><rect x='4.32' y='1.00' width='1.76' height='1.68' fill='#d2d4d6' transform='rotate(45 5.20 5.20)'/><rect x='4.32' y='1.00' width='1.76' height='1.68' fill='#d2d4d6' transform='rotate(90 5.20 5.20)'/><rect x='4.32' y='1.00' width='1.76' height='1.68' fill='#d2d4d6' transform='rotate(135 5.20 5.20)'/><rect x='4.32' y='1.00' width='1.76' height='1.68' fill='#d2d4d6' transform='rotate(180 5.20 5.20)'/><rect x='4.32' y='1.00' width='1.76' height='1.68' fill='#d2d4d6' transform='rotate(225 5.20 5.20)'/><rect x='4.32' y='1.00' width='1.76' height='1.68' fill='#d2d4d6' transform='rotate(270 5.20 5.20)'/><rect x='4.32' y='1.00' width='1.76' height='1.68' fill='#d2d4d6' transform='rotate(315 5.20 5.20)'/></svg><svg style='position:absolute;left:640.3px;top:386px' width='7' height='8'><path d='M0.8,0 H6.2 V1 H5.3 V3.6 L6.6,5.6 H3.9 V8 H3.1 V5.6 H0.4 L1.7,3.6 V1 H0.8 Z' fill='#d2d4d6'/></svg><div style='position:absolute;left:500px;top:396px;width:148px;height:1px;background:#d5d5d5'></div><div class='t tt' style='left:659px;top:338px'>MOS</div><svg style='position:absolute;left:743.85px;top:344.85px' width='50.30' height='50.30'><path d='M25.15,25.15 L10.19,40.11 A21.15,21.15 0 1 1 40.11,40.11 Z' fill='#b8c41c'/><circle cx='22.53' cy='27.65' r='14.80' fill='#fff'/><path d='M9.89,40.41 L27.15,24.46 A0.93,0.93 0 0 0 25.84,23.15 Z' fill='#777'/></svg><svg style='position:absolute;left:781.60px;top:384.30px' width='10.40' height='10.40'><circle cx='5.20' cy='5.20' r='2.60' fill='none' stroke='#d2d4d6' stroke-width='2.18'/><rect x='4.32' y='1.00' width='1.76' height='1.68' fill='#d2d4d6' transform='rotate(0 5.20 5.20)'/><rect x='4.32' y='1.00' width='1.76' height='1.68' fill='#d2d4d6' transform='rotate(45 5.20 5.20)'/><rect x='4.32' y='1.00' width='1.76' height='1.68' fill='#d2d4d6' transform='rotate(90 5.20 5.20)'/><rect x='4.32' y='1.00' width='1.76' height='1.68' fill='#d2d4d6' transform='rotate(135 5.20 5.20)'/><rect x='4.32' y='1.00' width='1.76' height='1.68' fill='#d2d4d6' transform='rotate(180 5.20 5.20)'/><rect x='4.32' y='1.00' width='1.76' height='1.68' fill='#d2d4d6' transform='rotate(225 5.20 5.20)'/><rect x='4.32' y='1.00' width='1.76' height='1.68' fill='#d2d4d6' transform='rotate(270 5.20 5.20)'/><rect x='4.32' y='1.00' width='1.76' height='1.68' fill='#d2d4d6' transform='rotate(315 5.20 5.20)'/></svg><svg style='position:absolute;left:794.3px;top:386px' width='7' height='8'><path d='M0.8,0 H6.2 V1 H5.3 V3.6 L6.6,5.6 H3.9 V8 H3.1 V5.6 H0.4 L1.7,3.6 V1 H0.8 Z' fill='#d2d4d6'/></svg><div style='position:absolute;left:654px;top:396px;width:148px;height:1px;background:#d5d5d5'></div><div class='t tt' style='left:43px;top:411px'>Packets Lost</div><svg style='position:absolute;left:127.85px;top:417.85px' width='50.30' height='50.30'><path d='M25.15,25.15 L10.19,40.11 A21.15,21.15 0 1 1 40.11,40.11 Z' fill='#b8c41c'/><circle cx='22.53' cy='27.65' r='14.80' fill='#fff'/><path d='M9.89,40.41 L27.15,24.46 A0.93,0.93 0 0 0 25.84,23.15 Z' fill='#777'/></svg><svg style='position:absolute;left:165.60px;top:457.30px' width='10.40' height='10.40'><circle cx='5.20' cy='5.20' r='2.60' fill='none' stroke='#d2d4d6' stroke-width='2.18'/><rect x='4.32' y='1.00' width='1.76' height='1.68' fill='#d2d4d6' transform='rotate(0 5.20 5.20)'/><rect x='4.32' y='1.00' width='1.76' height='1.68' fill='#d2d4d6' transform='rotate(45 5.20 5.20)'/><rect x='4.32' y='1.00' width='1.76' height='1.68' fill='#d2d4d6' transform='rotate(90 5.20 5.20)'/><rect x='4.32' y='1.00' width='1.76' height='1.68' fill='#d2d4d6' transform='rotate(135 5.20 5.20)'/><rect x='4.32' y='1.00' width='1.76' height='1.68' fill='#d2d4d6' transform='rotate(180 5.20 5.20)'/><rect x='4.32' y='1.00' width='1.76' height='1.68' fill='#d2d4d6' transform='rotate(225 5.20 5.20)'/><rect x='4.32' y='1.00' width='1.76' height='1.68' fill='#d2d4d6' transform='rotate(270 5.20 5.20)'/><rect x='4.32' y='1.00' width='1.76' height='1.68' fill='#d2d4d6' transform='rotate(315 5.20 5.20)'/></svg><svg style='position:absolute;left:178.3px;top:459px' width='7' height='8'><path d='M0.8,0 H6.2 V1 H5.3 V3.6 L6.6,5.6 H3.9 V8 H3.1 V5.6 H0.4 L1.7,3.6 V1 H0.8 Z' fill='#d2d4d6'/></svg><div style='position:absolute;left:38px;top:469px;width:148px;height:1px;background:#d5d5d5'></div><div class='t tt' style='left:197px;top:411px'>Packets Lost %</div><svg style='position:absolute;left:281.85px;top:417.85px' width='50.30' height='50.30'><path d='M25.15,25.15 L10.19,40.11 A21.15,21.15 0 1 1 40.11,40.11 Z' fill='#b8c41c'/><circle cx='22.53' cy='27.65' r='14.80' fill='#fff'/><path d='M9.89,40.41 L27.15,24.46 A0.93,0.93 0 0 0 25.84,23.15 Z' fill='#777'/></svg><svg style='position:absolute;left:319.60px;top:457.30px' width='10.40' height='10.40'><circle cx='5.20' cy='5.20' r='2.60' fill='none' stroke='#d2d4d6' stroke-width='2.18'/><rect x='4.32' y='1.00' width='1.76' height='1.68' fill='#d2d4d6' transform='rotate(0 5.20 5.20)'/><rect x='4.32' y='1.00' width='1.76' height='1.68' fill='#d2d4d6' transform='rotate(45 5.20 5.20)'/><rect x='4.32' y='1.00' width='1.76' height='1.68' fill='#d2d4d6' transform='rotate(90 5.20 5.20)'/><rect x='4.32' y='1.00' width='1.76' height='1.68' fill='#d2d4d6' transform='rotate(135 5.20 5.20)'/><rect x='4.32' y='1.00' width='1.76' height='1.68' fill='#d2d4d6' transform='rotate(180 5.20 5.20)'/><rect x='4.32' y='1.00' width='1.76' height='1.68' fill='#d2d4d6' transform='rotate(225 5.20 5.20)'/><rect x='4.32' y='1.00' width='1.76' height='1.68' fill='#d2d4d6' transform='rotate(270 5.20 5.20)'/><rect x='4.32' y='1.00' width='1.76' height='1.68' fill='#d2d4d6' transform='rotate(315 5.20 5.20)'/></svg><svg style='position:absolute;left:332.3px;top:459px' width='7' height='8'><path d='M0.8,0 H6.2 V1 H5.3 V3.6 L6.6,5.6 H3.9 V8 H3.1 V5.6 H0.4 L1.7,3.6 V1 H0.8 Z' fill='#d2d4d6'/></svg><div style='position:absolute;left:192px;top:469px;width:148px;height:1px;background:#d5d5d5'></div><div class='t tt' style='left:351px;top:411px'>Packets Out of Sequence</div><svg style='position:absolute;left:435.85px;top:417.85px' width='50.30' height='50.30'><path d='M25.15,25.15 L10.19,40.11 A21.15,21.15 0 1 1 40.11,40.11 Z' fill='#b8c41c'/><circle cx='22.53' cy='27.65' r='14.80' fill='#fff'/><path d='M9.89,40.41 L27.15,24.46 A0.93,0.93 0 0 0 25.84,23.15 Z' fill='#777'/></svg><svg style='position:absolute;left:473.60px;top:457.30px' width='10.40' height='10.40'><circle cx='5.20' cy='5.20' r='2.60' fill='none' stroke='#d2d4d6' stroke-width='2.18'/><rect x='4.32' y='1.00' width='1.76' height='1.68' fill='#d2d4d6' transform='rotate(0 5.20 5.20)'/><rect x='4.32' y='1.00' width='1.76' height='1.68' fill='#d2d4d6' transform='rotate(45 5.20 5.20)'/><rect x='4.32' y='1.00' width='1.76' height='1.68' fill='#d2d4d6' transform='rotate(90 5.20 5.20)'/><rect x='4.32' y='1.00' width='1.76' height='1.68' fill='#d2d4d6' transform='rotate(135 5.20 5.20)'/><rect x='4.32' y='1.00' width='1.76' height='1.68' fill='#d2d4d6' transform='rotate(180 5.20 5.20)'/><rect x='4.32' y='1.00' width='1.76' height='1.68' fill='#d2d4d6' transform='rotate(225 5.20 5.20)'/><rect x='4.32' y='1.00' width='1.76' height='1.68' fill='#d2d4d6' transform='rotate(270 5.20 5.20)'/><rect x='4.32' y='1.00' width='1.76' height='1.68' fill='#d2d4d6' transform='rotate(315 5.20 5.20)'/></svg><svg style='position:absolute;left:486.3px;top:459px' width='7' height='8'><path d='M0.8,0 H6.2 V1 H5.3 V3.6 L6.6,5.6 H3.9 V8 H3.1 V5.6 H0.4 L1.7,3.6 V1 H0.8 Z' fill='#d2d4d6'/></svg><div style='position:absolute;left:346px;top:469px;width:148px;height:1px;background:#d5d5d5'></div><div class='panel' style='left:33px;top:492px;width:900px;height:500px'></div><div class='t th' style='left:63px;top:537.5px;letter-spacing:-0.3px'>Channel</div><svg style='position:absolute;left:116px;top:544px' width='8' height='4'><path d='M0,0 H8 L4,4 Z' fill='#1c2233'/></svg><div class='t th' style='left:240px;top:537.5px'>ID</div><svg style='position:absolute;left:258px;top:537px' width='9' height='12'><path d='M0.5,5 L4.5,0.5 L8.5,5 Z M0.5,7 L4.5,11.5 L8.5,7 Z' fill='#c8c8c8'/></svg><div class='t th' style='left:326.5px;top:537.5px'>Last</div><div class='t th' style='left:303px;top:552.5px'>Value</div><svg style='position:absolute;left:341px;top:552px' width='9' height='12'><path d='M0.5,5 L4.5,0.5 L8.5,5 Z M0.5,7 L4.5,11.5 L8.5,7 Z' fill='#c8c8c8'/></svg><div class='t th' style='left:475px;top:537.5px'>Minimum</div><svg style='position:absolute;left:535px;top:537px' width='9' height='12'><path d='M0.5,5 L4.5,0.5 L8.5,5 Z M0.5,7 L4.5,11.5 L8.5,7 Z' fill='#c8c8c8'/></svg><div class='t th' style='left:667px;top:537.5px'>Maximum</div><svg style='position:absolute;left:730px;top:537px' width='9' height='12'><path d='M0.5,5 L4.5,0.5 L8.5,5 Z M0.5,7 L4.5,11.5 L8.5,7 Z' fill='#c8c8c8'/></svg><div style='position:absolute;left:53px;top:570px;width:827px;height:1px;background:#e3e3e3'></div><div class='t td' style='left:63px;top:585.5px'>Avg. Jitter</div><div class='t td' style='right:631px;top:585.5px'>6</div><div class='t td' style='right:353px;top:585.5px'>0 msec</div><div class='t td' style='right:159px;top:585.5px'>0 msec</div><svg style='position:absolute;left:805px;top:582px' width='16' height='16'><circle cx='10.7' cy='6.3' r='3.05' fill='none' stroke='#3a3a3a' stroke-width='2.3'/><rect x='10.2' y='1.3' width='1' height='1.2' fill='#3a3a3a' transform='rotate(0 10.7 6.3)'/><rect x='10.2' y='1.3' width='1' height='1.2' fill='#3a3a3a' transform='rotate(45 10.7 6.3)'/><rect x='10.2' y='1.3' width='1' height='1.2' fill='#3a3a3a' transform='rotate(90 10.7 6.3)'/><rect x='10.2' y='1.3' width='1' height='1.2' fill='#3a3a3a' transform='rotate(135 10.7 6.3)'/><rect x='10.2' y='1.3' width='1' height='1.2' fill='#3a3a3a' transform='rotate(180 10.7 6.3)'/><rect x='10.2' y='1.3' width='1' height='1.2' fill='#3a3a3a' transform='rotate(225 10.7 6.3)'/><rect x='10.2' y='1.3' width='1' height='1.2' fill='#3a3a3a' transform='rotate(270 10.7 6.3)'/><rect x='10.2' y='1.3' width='1' height='1.2' fill='#3a3a3a' transform='rotate(315 10.7 6.3)'/><circle cx='5' cy='12.3' r='1.65' fill='none' stroke='#3a3a3a' stroke-width='1.3'/><rect x='4.6' y='9.5' width='0.8' height='0.9' fill='#3a3a3a' transform='rotate(0 5 12.3)'/><rect x='4.6' y='9.5' width='0.8' height='0.9' fill='#3a3a3a' transform='rotate(60 5 12.3)'/><rect x='4.6' y='9.5' width='0.8' height='0.9' fill='#3a3a3a' transform='rotate(120 5 12.3)'/><rect x='4.6' y='9.5' width='0.8' height='0.9' fill='#3a3a3a' transform='rotate(180 5 12.3)'/><rect x='4.6' y='9.5' width='0.8' height='0.9' fill='#3a3a3a' transform='rotate(240 5 12.3)'/><rect x='4.6' y='9.5' width='0.8' height='0.9' fill='#3a3a3a' transform='rotate(300 5 12.3)'/></svg><div style='position:absolute;left:53px;top:603px;width:827px;height:1px;background:#e6e6e6'></div><div class='t td' style='left:63px;top:618.5px'>Avg. Jitter Destination -<i class=el>...</i></div><div class='t td' style='right:631px;top:618.5px'>21</div><svg style='position:absolute;left:805px;top:615px' width='16' height='16'><circle cx='10.7' cy='6.3' r='3.05' fill='none' stroke='#3a3a3a' stroke-width='2.3'/><rect x='10.2' y='1.3' width='1' height='1.2' fill='#3a3a3a' transform='rotate(0 10.7 6.3)'/><rect x='10.2' y='1.3' width='1' height='1.2' fill='#3a3a3a' transform='rotate(45 10.7 6.3)'/><rect x='10.2' y='1.3' width='1' height='1.2' fill='#3a3a3a' transform='rotate(90 10.7 6.3)'/><rect x='10.2' y='1.3' width='1' height='1.2' fill='#3a3a3a' transform='rotate(135 10.7 6.3)'/><rect x='10.2' y='1.3' width='1' height='1.2' fill='#3a3a3a' transform='rotate(180 10.7 6.3)'/><rect x='10.2' y='1.3' width='1' height='1.2' fill='#3a3a3a' transform='rotate(225 10.7 6.3)'/><rect x='10.2' y='1.3' width='1' height='1.2' fill='#3a3a3a' transform='rotate(270 10.7 6.3)'/><rect x='10.2' y='1.3' width='1' height='1.2' fill='#3a3a3a' transform='rotate(315 10.7 6.3)'/><circle cx='5' cy='12.3' r='1.65' fill='none' stroke='#3a3a3a' stroke-width='1.3'/><rect x='4.6' y='9.5' width='0.8' height='0.9' fill='#3a3a3a' transform='rotate(0 5 12.3)'/><rect x='4.6' y='9.5' width='0.8' height='0.9' fill='#3a3a3a' transform='rotate(60 5 12.3)'/><rect x='4.6' y='9.5' width='0.8' height='0.9' fill='#3a3a3a' transform='rotate(120 5 12.3)'/><rect x='4.6' y='9.5' width='0.8' height='0.9' fill='#3a3a3a' transform='rotate(180 5 12.3)'/><rect x='4.6' y='9.5' width='0.8' height='0.9' fill='#3a3a3a' transform='rotate(240 5 12.3)'/><rect x='4.6' y='9.5' width='0.8' height='0.9' fill='#3a3a3a' transform='rotate(300 5 12.3)'/></svg><div style='position:absolute;left:53px;top:636px;width:827px;height:1px;background:#e6e6e6'></div><div class='t td' style='left:63px;top:651.5px'>Avg. Jitter Source - Des<i class=el>...</i></div><div class='t td' style='right:631px;top:651.5px'>20</div><svg style='position:absolute;left:805px;top:648px' width='16' height='16'><circle cx='10.7' cy='6.3' r='3.05' fill='none' stroke='#3a3a3a' stroke-width='2.3'/><rect x='10.2' y='1.3' width='1' height='1.2' fill='#3a3a3a' transform='rotate(0 10.7 6.3)'/><rect x='10.2' y='1.3' width='1' height='1.2' fill='#3a3a3a' transform='rotate(45 10.7 6.3)'/><rect x='10.2' y='1.3' width='1' height='1.2' fill='#3a3a3a' transform='rotate(90 10.7 6.3)'/><rect x='10.2' y='1.3' width='1' height='1.2' fill='#3a3a3a' transform='rotate(135 10.7 6.3)'/><rect x='10.2' y='1.3' width='1' height='1.2' fill='#3a3a3a' transform='rotate(180 10.7 6.3)'/><rect x='10.2' y='1.3' width='1' height='1.2' fill='#3a3a3a' transform='rotate(225 10.7 6.3)'/><rect x='10.2' y='1.3' width='1' height='1.2' fill='#3a3a3a' transform='rotate(270 10.7 6.3)'/><rect x='10.2' y='1.3' width='1' height='1.2' fill='#3a3a3a' transform='rotate(315 10.7 6.3)'/><circle cx='5' cy='12.3' r='1.65' fill='none' stroke='#3a3a3a' stroke-width='1.3'/><rect x='4.6' y='9.5' width='0.8' height='0.9' fill='#3a3a3a' transform='rotate(0 5 12.3)'/><rect x='4.6' y='9.5' width='0.8' height='0.9' fill='#3a3a3a' transform='rotate(60 5 12.3)'/><rect x='4.6' y='9.5' width='0.8' height='0.9' fill='#3a3a3a' transform='rotate(120 5 12.3)'/><rect x='4.6' y='9.5' width='0.8' height='0.9' fill='#3a3a3a' transform='rotate(180 5 12.3)'/><rect x='4.6' y='9.5' width='0.8' height='0.9' fill='#3a3a3a' transform='rotate(240 5 12.3)'/><rect x='4.6' y='9.5' width='0.8' height='0.9' fill='#3a3a3a' transform='rotate(300 5 12.3)'/></svg><div style='position:absolute;left:53px;top:669px;width:827px;height:1px;background:#e6e6e6'></div><div class='t td' style='left:63px;top:684.5px'>Avg. Latency Destinatio<i class=el>...</i></div><div class='t td' style='right:631px;top:684.5px'>18</div><div class='t td' style='right:353px;top:684.5px'>0 msec</div><div class='t td' style='right:159px;top:684.5px'>0 msec</div><svg style='position:absolute;left:805px;top:681px' width='16' height='16'><circle cx='10.7' cy='6.3' r='3.05' fill='none' stroke='#3a3a3a' stroke-width='2.3'/><rect x='10.2' y='1.3' width='1' height='1.2' fill='#3a3a3a' transform='rotate(0 10.7 6.3)'/><rect x='10.2' y='1.3' width='1' height='1.2' fill='#3a3a3a' transform='rotate(45 10.7 6.3)'/><rect x='10.2' y='1.3' width='1' height='1.2' fill='#3a3a3a' transform='rotate(90 10.7 6.3)'/><rect x='10.2' y='1.3' width='1' height='1.2' fill='#3a3a3a' transform='rotate(135 10.7 6.3)'/><rect x='10.2' y='1.3' width='1' height='1.2' fill='#3a3a3a' transform='rotate(180 10.7 6.3)'/><rect x='10.2' y='1.3' width='1' height='1.2' fill='#3a3a3a' transform='rotate(225 10.7 6.3)'/><rect x='10.2' y='1.3' width='1' height='1.2' fill='#3a3a3a' transform='rotate(270 10.7 6.3)'/><rect x='10.2' y='1.3' width='1' height='1.2' fill='#3a3a3a' transform='rotate(315 10.7 6.3)'/><circle cx='5' cy='12.3' r='1.65' fill='none' stroke='#3a3a3a' stroke-width='1.3'/><rect x='4.6' y='9.5' width='0.8' height='0.9' fill='#3a3a3a' transform='rotate(0 5 12.3)'/><rect x='4.6' y='9.5' width='0.8' height='0.9' fill='#3a3a3a' transform='rotate(60 5 12.3)'/><rect x='4.6' y='9.5' width='0.8' height='0.9' fill='#3a3a3a' transform='rotate(120 5 12.3)'/><rect x='4.6' y='9.5' width='0.8' height='0.9' fill='#3a3a3a' transform='rotate(180 5 12.3)'/><rect x='4.6' y='9.5' width='0.8' height='0.9' fill='#3a3a3a' transform='rotate(240 5 12.3)'/><rect x='4.6' y='9.5' width='0.8' height='0.9' fill='#3a3a3a' transform='rotate(300 5 12.3)'/></svg><div style='position:absolute;left:53px;top:702px;width:827px;height:1px;background:#e6e6e6'></div><div class='t td' style='left:63px;top:717.5px'>Avg. Latency Source - D<i class=el>...</i></div><div class='t td' style='right:631px;top:717.5px'>15</div><div class='t td' style='right:353px;top:717.5px'>0 msec</div><div class='t td' style='right:159px;top:717.5px'>0 msec</div><svg style='position:absolute;left:805px;top:714px' width='16' height='16'><circle cx='10.7' cy='6.3' r='3.05' fill='none' stroke='#3a3a3a' stroke-width='2.3'/><rect x='10.2' y='1.3' width='1' height='1.2' fill='#3a3a3a' transform='rotate(0 10.7 6.3)'/><rect x='10.2' y='1.3' width='1' height='1.2' fill='#3a3a3a' transform='rotate(45 10.7 6.3)'/><rect x='10.2' y='1.3' width='1' height='1.2' fill='#3a3a3a' transform='rotate(90 10.7 6.3)'/><rect x='10.2' y='1.3' width='1' height='1.2' fill='#3a3a3a' transform='rotate(135 10.7 6.3)'/><rect x='10.2' y='1.3' width='1' height='1.2' fill='#3a3a3a' transform='rotate(180 10.7 6.3)'/><rect x='10.2' y='1.3' width='1' height='1.2' fill='#3a3a3a' transform='rotate(225 10.7 6.3)'/><rect x='10.2' y='1.3' width='1' height='1.2' fill='#3a3a3a' transform='rotate(270 10.7 6.3)'/><rect x='10.2' y='1.3' width='1' height='1.2' fill='#3a3a3a' transform='rotate(315 10.7 6.3)'/><circle cx='5' cy='12.3' r='1.65' fill='none' stroke='#3a3a3a' stroke-width='1.3'/><rect x='4.6' y='9.5' width='0.8' height='0.9' fill='#3a3a3a' transform='rotate(0 5 12.3)'/><rect x='4.6' y='9.5' width='0.8' height='0.9' fill='#3a3a3a' transform='rotate(60 5 12.3)'/><rect x='4.6' y='9.5' width='0.8' height='0.9' fill='#3a3a3a' transform='rotate(120 5 12.3)'/><rect x='4.6' y='9.5' width='0.8' height='0.9' fill='#3a3a3a' transform='rotate(180 5 12.3)'/><rect x='4.6' y='9.5' width='0.8' height='0.9' fill='#3a3a3a' transform='rotate(240 5 12.3)'/><rect x='4.6' y='9.5' width='0.8' height='0.9' fill='#3a3a3a' transform='rotate(300 5 12.3)'/></svg><div style='position:absolute;left:53px;top:735px;width:827px;height:1px;background:#e6e6e6'></div><div class='t td' style='left:63px;top:750.5px'>Avg. Round Trip Time (<i class=el>...</i></div><div class='t td' style='right:631px;top:750.5px'>0</div><div class='t td' style='right:353px;top:750.5px'>0 msec</div><div class='t td' style='right:159px;top:750.5px'>0 msec</div><svg style='position:absolute;left:805px;top:747px' width='16' height='16'><circle cx='10.7' cy='6.3' r='3.05' fill='none' stroke='#3a3a3a' stroke-width='2.3'/><rect x='10.2' y='1.3' width='1' height='1.2' fill='#3a3a3a' transform='rotate(0 10.7 6.3)'/><rect x='10.2' y='1.3' width='1' height='1.2' fill='#3a3a3a' transform='rotate(45 10.7 6.3)'/><rect x='10.2' y='1.3' width='1' height='1.2' fill='#3a3a3a' transform='rotate(90 10.7 6.3)'/><rect x='10.2' y='1.3' width='1' height='1.2' fill='#3a3a3a' transform='rotate(135 10.7 6.3)'/><rect x='10.2' y='1.3' width='1' height='1.2' fill='#3a3a3a' transform='rotate(180 10.7 6.3)'/><rect x='10.2' y='1.3' width='1' height='1.2' fill='#3a3a3a' transform='rotate(225 10.7 6.3)'/><rect x='10.2' y='1.3' width='1' height='1.2' fill='#3a3a3a' transform='rotate(270 10.7 6.3)'/><rect x='10.2' y='1.3' width='1' height='1.2' fill='#3a3a3a' transform='rotate(315 10.7 6.3)'/><circle cx='5' cy='12.3' r='1.65' fill='none' stroke='#3a3a3a' stroke-width='1.3'/><rect x='4.6' y='9.5' width='0.8' height='0.9' fill='#3a3a3a' transform='rotate(0 5 12.3)'/><rect x='4.6' y='9.5' width='0.8' height='0.9' fill='#3a3a3a' transform='rotate(60 5 12.3)'/><rect x='4.6' y='9.5' width='0.8' height='0.9' fill='#3a3a3a' transform='rotate(120 5 12.3)'/><rect x='4.6' y='9.5' width='0.8' height='0.9' fill='#3a3a3a' transform='rotate(180 5 12.3)'/><rect x='4.6' y='9.5' width='0.8' height='0.9' fill='#3a3a3a' transform='rotate(240 5 12.3)'/><rect x='4.6' y='9.5' width='0.8' height='0.9' fill='#3a3a3a' transform='rotate(300 5 12.3)'/></svg><div style='position:absolute;left:53px;top:768px;width:827px;height:1px;background:#e6e6e6'></div><div class='t td' style='left:63px;top:783.5px'>Downtime</div><div class='t td' style='right:631px;top:783.5px'>-4</div><svg style='position:absolute;left:805px;top:780px' width='16' height='16'><circle cx='10.7' cy='6.3' r='3.05' fill='none' stroke='#3a3a3a' stroke-width='2.3'/><rect x='10.2' y='1.3' width='1' height='1.2' fill='#3a3a3a' transform='rotate(0 10.7 6.3)'/><rect x='10.2' y='1.3' width='1' height='1.2' fill='#3a3a3a' transform='rotate(45 10.7 6.3)'/><rect x='10.2' y='1.3' width='1' height='1.2' fill='#3a3a3a' transform='rotate(90 10.7 6.3)'/><rect x='10.2' y='1.3' width='1' height='1.2' fill='#3a3a3a' transform='rotate(135 10.7 6.3)'/><rect x='10.2' y='1.3' width='1' height='1.2' fill='#3a3a3a' transform='rotate(180 10.7 6.3)'/><rect x='10.2' y='1.3' width='1' height='1.2' fill='#3a3a3a' transform='rotate(225 10.7 6.3)'/><rect x='10.2' y='1.3' width='1' height='1.2' fill='#3a3a3a' transform='rotate(270 10.7 6.3)'/><rect x='10.2' y='1.3' width='1' height='1.2' fill='#3a3a3a' transform='rotate(315 10.7 6.3)'/><circle cx='5' cy='12.3' r='1.65' fill='none' stroke='#3a3a3a' stroke-width='1.3'/><rect x='4.6' y='9.5' width='0.8' height='0.9' fill='#3a3a3a' transform='rotate(0 5 12.3)'/><rect x='4.6' y='9.5' width='0.8' height='0.9' fill='#3a3a3a' transform='rotate(60 5 12.3)'/><rect x='4.6' y='9.5' width='0.8' height='0.9' fill='#3a3a3a' transform='rotate(120 5 12.3)'/><rect x='4.6' y='9.5' width='0.8' height='0.9' fill='#3a3a3a' transform='rotate(180 5 12.3)'/><rect x='4.6' y='9.5' width='0.8' height='0.9' fill='#3a3a3a' transform='rotate(240 5 12.3)'/><rect x='4.6' y='9.5' width='0.8' height='0.9' fill='#3a3a3a' transform='rotate(300 5 12.3)'/></svg><div style='position:absolute;left:53px;top:801px;width:827px;height:1px;background:#e6e6e6'></div><div class='t td' style='left:63px;top:816.5px'>ICPIF</div><div class='t td' style='right:631px;top:816.5px'>7</div><div class='t td' style='right:353px;top:816.5px'>0 ICPIF</div><div class='t td' style='right:159px;top:816.5px'>0 ICPIF</div><svg style='position:absolute;left:805px;top:813px' width='16' height='16'><circle cx='10.7' cy='6.3' r='3.05' fill='none' stroke='#3a3a3a' stroke-width='2.3'/><rect x='10.2' y='1.3' width='1' height='1.2' fill='#3a3a3a' transform='rotate(0 10.7 6.3)'/><rect x='10.2' y='1.3' width='1' height='1.2' fill='#3a3a3a' transform='rotate(45 10.7 6.3)'/><rect x='10.2' y='1.3' width='1' height='1.2' fill='#3a3a3a' transform='rotate(90 10.7 6.3)'/><rect x='10.2' y='1.3' width='1' height='1.2' fill='#3a3a3a' transform='rotate(135 10.7 6.3)'/><rect x='10.2' y='1.3' width='1' height='1.2' fill='#3a3a3a' transform='rotate(180 10.7 6.3)'/><rect x='10.2' y='1.3' width='1' height='1.2' fill='#3a3a3a' transform='rotate(225 10.7 6.3)'/><rect x='10.2' y='1.3' width='1' height='1.2' fill='#3a3a3a' transform='rotate(270 10.7 6.3)'/><rect x='10.2' y='1.3' width='1' height='1.2' fill='#3a3a3a' transform='rotate(315 10.7 6.3)'/><circle cx='5' cy='12.3' r='1.65' fill='none' stroke='#3a3a3a' stroke-width='1.3'/><rect x='4.6' y='9.5' width='0.8' height='0.9' fill='#3a3a3a' transform='rotate(0 5 12.3)'/><rect x='4.6' y='9.5' width='0.8' height='0.9' fill='#3a3a3a' transform='rotate(60 5 12.3)'/><rect x='4.6' y='9.5' width='0.8' height='0.9' fill='#3a3a3a' transform='rotate(120 5 12.3)'/><rect x='4.6' y='9.5' width='0.8' height='0.9' fill='#3a3a3a' transform='rotate(180 5 12.3)'/><rect x='4.6' y='9.5' width='0.8' height='0.9' fill='#3a3a3a' transform='rotate(240 5 12.3)'/><rect x='4.6' y='9.5' width='0.8' height='0.9' fill='#3a3a3a' transform='rotate(300 5 12.3)'/></svg><div style='position:absolute;left:53px;top:834px;width:827px;height:1px;background:#e6e6e6'></div><div class='t td' style='left:63px;top:849.5px'>Late Packets</div><div class='t td' style='right:631px;top:849.5px'>11</div><div class='t td' style='right:353px;top:849.5px'>0 #</div><div class='t td' style='right:159px;top:849.5px'>0 #</div><svg style='position:absolute;left:805px;top:846px' width='16' height='16'><circle cx='10.7' cy='6.3' r='3.05' fill='none' stroke='#3a3a3a' stroke-width='2.3'/><rect x='10.2' y='1.3' width='1' height='1.2' fill='#3a3a3a' transform='rotate(0 10.7 6.3)'/><rect x='10.2' y='1.3' width='1' height='1.2' fill='#3a3a3a' transform='rotate(45 10.7 6.3)'/><rect x='10.2' y='1.3' width='1' height='1.2' fill='#3a3a3a' transform='rotate(90 10.7 6.3)'/><rect x='10.2' y='1.3' width='1' height='1.2' fill='#3a3a3a' transform='rotate(135 10.7 6.3)'/><rect x='10.2' y='1.3' width='1' height='1.2' fill='#3a3a3a' transform='rotate(180 10.7 6.3)'/><rect x='10.2' y='1.3' width='1' height='1.2' fill='#3a3a3a' transform='rotate(225 10.7 6.3)'/><rect x='10.2' y='1.3' width='1' height='1.2' fill='#3a3a3a' transform='rotate(270 10.7 6.3)'/><rect x='10.2' y='1.3' width='1' height='1.2' fill='#3a3a3a' transform='rotate(315 10.7 6.3)'/><circle cx='5' cy='12.3' r='1.65' fill='none' stroke='#3a3a3a' stroke-width='1.3'/><rect x='4.6' y='9.5' width='0.8' height='0.9' fill='#3a3a3a' transform='rotate(0 5 12.3)'/><rect x='4.6' y='9.5' width='0.8' height='0.9' fill='#3a3a3a' transform='rotate(60 5 12.3)'/><rect x='4.6' y='9.5' width='0.8' height='0.9' fill='#3a3a3a' transform='rotate(120 5 12.3)'/><rect x='4.6' y='9.5' width='0.8' height='0.9' fill='#3a3a3a' transform='rotate(180 5 12.3)'/><rect x='4.6' y='9.5' width='0.8' height='0.9' fill='#3a3a3a' transform='rotate(240 5 12.3)'/><rect x='4.6' y='9.5' width='0.8' height='0.9' fill='#3a3a3a' transform='rotate(300 5 12.3)'/></svg><div style='position:absolute;left:53px;top:867px;width:827px;height:1px;background:#e6e6e6'></div>
</body></html>
